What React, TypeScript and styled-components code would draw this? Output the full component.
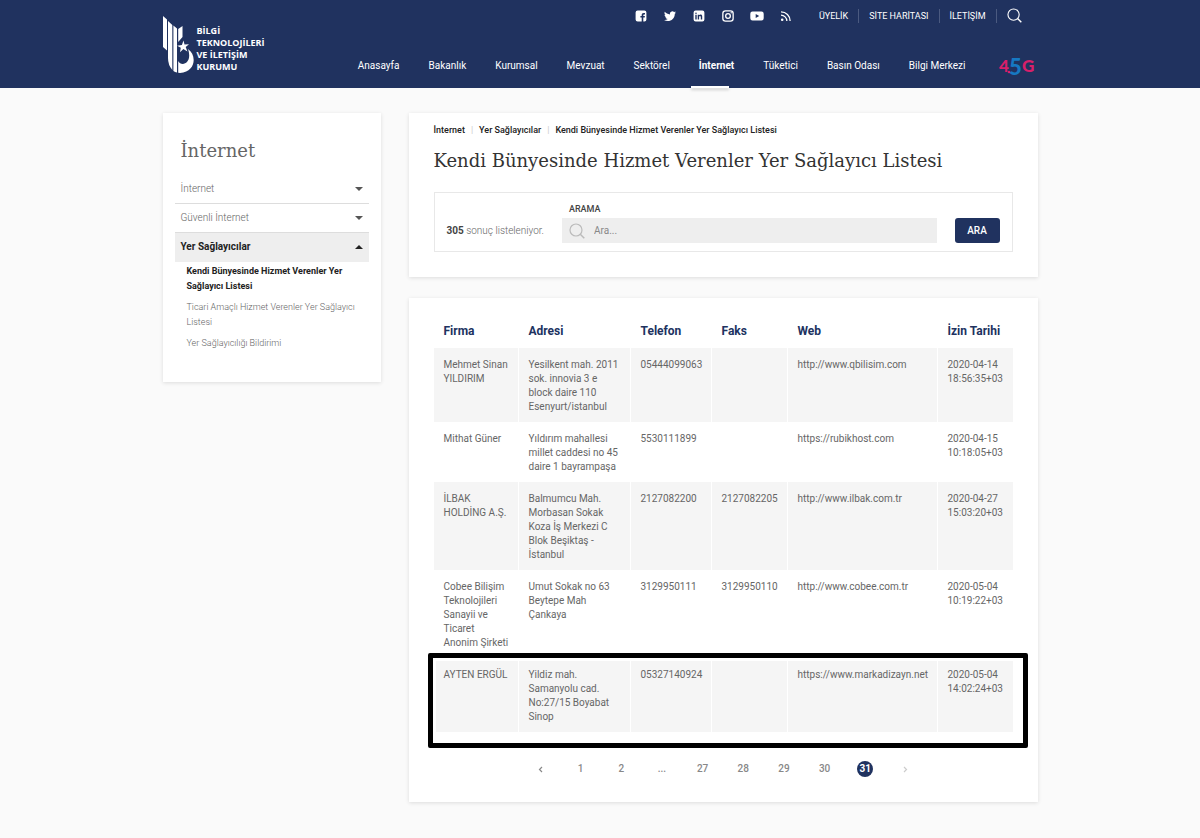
import React from 'react';
import styled, { createGlobalStyle, css } from 'styled-components';

const navy = '#20325f';

const GlobalStyle = createGlobalStyle`
  *, *::before, *::after { box-sizing: border-box; }
  body {
    margin: 0;
    background: #fafafa;
    color: #666;
    font-family: Roboto, "Liberation Sans", sans-serif;
    font-size: 10px;
    line-height: 14px;
  }
  a { color: inherit; text-decoration: none; }
  button, input { font: inherit; }
  ul { list-style: none; margin: 0; padding: 0; }
  h1, h2 { margin: 0; font-weight: 400; }
`;

const Container = styled.div`
  width: 100%;
  max-width: 875px;
  margin: 0 auto;
`;

const Header = styled.header`
  background: ${navy};
  color: #fff;
`;

const HeaderInner = styled(Container)`
  display: flex;
  justify-content: space-between;
  min-height: 88px;
`;

const Logo = styled.a`
  display: flex;
  align-items: flex-start;
  gap: 3px;
  padding-top: 16px;
  svg { width: 31px; height: 57px; }
`;

const LogoText = styled.span`
  padding-top: 9px;
  font-family: "Open Sans", sans-serif;
  font-size: 9px;
  font-weight: 700;
  line-height: 12px;
`;

const HeaderRight = styled.div`
  display: flex;
  flex-direction: column;
  justify-content: space-between;
`;

const TopBar = styled.div`
  display: flex;
  align-items: center;
  justify-content: flex-end;
  gap: 16px;
  padding: 8px 16px 0 0;
`;

const Social = styled.ul`
  display: flex;
  align-items: center;
  gap: 15px;
  a { display: grid; place-items: center; width: 14px; height: 14px; }
  svg { width: 14px; height: 14px; fill: #fff; }
`;

const TopLinks = styled.ul`
  display: flex;
  align-items: center;
  li { padding: 0 10px; border-right: 1px solid #4b5a80; font-size: 9px; }
`;

const SearchButton = styled.button`
  display: grid;
  margin-left: 10px;
  padding: 0;
  border: 0;
  background: none;
  color: #fff;
`;

const TopRight = styled.div`
  display: flex;
  align-items: center;
`;

const Nav = styled.nav`
  display: flex;
  align-items: flex-end;
  gap: 29px;
  padding-right: 3px;
`;

const NavLink = styled.a<{ $active?: boolean }>`
  position: relative;
  padding-bottom: 15px;
  ${(p) =>
    p.$active &&
    css`
      font-weight: 700;
      &::after {
        content: '';
        position: absolute;
        left: -8px;
        bottom: 0;
        width: 38px;
        height: 2px;
        background: #fff;
        box-shadow: 0 2px 3px rgba(0, 0, 0, 0.2);
      }
    `}
`;

const BrandLink = styled.a`
  display: grid;
  margin: 0 0 5px 4px;
  text {
    font-family: Lato, sans-serif;
    font-weight: 900;
  }
`;

const Page = styled(Container)`
  display: flex;
  align-items: flex-start;
  gap: 28px;
  padding: 25px 0 36px;
`;

const Card = styled.section`
  background: #fff;
  box-shadow: 0 1px 4px rgba(0, 0, 0, 0.12);
`;

const Sidebar = styled(Card).attrs({ as: 'aside' })`
  flex: 0 0 218px;
  padding: 25px 12px 31px;
`;

const SideTitle = styled.h2`
  padding: 0 6px;
  font-family: "Roboto Slab", "DejaVu Serif", serif;
  font-size: 18px;
  line-height: 26px;
  color: #666;
`;

const SideMenu = styled.ul`
  margin-top: 11px;
`;

const SideItem = styled.button<{ $open?: boolean }>`
  display: flex;
  align-items: center;
  justify-content: space-between;
  width: 100%;
  height: 29px;
  padding: 0 6px;
  border: 0;
  border-bottom: 1px solid ${(p) => (p.$open ? '#eee' : '#ddd')};
  background: ${(p) => (p.$open ? '#eee' : 'transparent')};
  color: ${(p) => (p.$open ? '#222' : '#666')};
  font-weight: ${(p) => (p.$open ? 700 : 300)};
  text-align: left;
  &::after {
    content: '';
    border: 4px solid transparent;
    border-bottom-width: ${(p) => (p.$open ? '4px' : '0')};
    border-top-width: ${(p) => (p.$open ? '0' : '4px')};
    border-${(p) => (p.$open ? 'bottom' : 'top')}-color: ${(p) => (p.$open ? '#222' : '#555')};
  }
`;

const SubMenu = styled.ul`
  display: grid;
  gap: 6px;
  padding: 2px 6px 0 12px;
`;

const SubLink = styled.a<{ $active?: boolean }>`
  display: block;
  font-size: 9px;
  line-height: 15px;
  font-weight: ${(p) => (p.$active ? 700 : 300)};
  color: ${(p) => (p.$active ? '#222' : '#666')};
`;

const Main = styled.main`
  flex: 1;
  min-width: 0;
  display: grid;
  gap: 21px;
`;

const HeadCard = styled(Card)`
  padding: 10px 25px 25px;
`;

const Crumbs = styled.ol`
  display: flex;
  margin: 0;
  padding: 0;
  list-style: none;
  font-size: 9px;
  font-weight: 500;
  color: #222;
  li + li::before {
    content: '|';
    margin: 0 6px;
    font-weight: 400;
    color: #ccc;
  }
`;

const Title = styled.h1`
  margin-top: 11px;
  font-family: "Roboto Slab", "DejaVu Serif", serif;
  font-size: 18px;
  line-height: 26px;
  color: #333;
`;

const SearchBox = styled.form`
  display: flex;
  align-items: flex-end;
  gap: 18px;
  margin-top: 18px;
  padding: 9px 12px 8px;
  border: 1px solid #e8e8e8;
`;

const ResultCount = styled.p`
  margin: 0;
  font-weight: 300;
  line-height: 25px;
  color: #666;
  b { font-weight: 700; color: #444; }
`;

const Field = styled.div`
  flex: 1;
  label {
    display: block;
    padding-left: 7px;
    margin-bottom: 2px;
    font-size: 9px;
    font-weight: 500;
    color: #444;
  }
`;

const InputWrap = styled.div`
  display: flex;
  align-items: center;
  gap: 9px;
  height: 25px;
  padding: 0 7px;
  background: #eee;
  color: #bbb;
  input {
    flex: 1;
    min-width: 0;
    padding: 0;
    border: 0;
    outline: 0;
    background: none;
    color: #444;
  }
  input::placeholder { color: #888; opacity: 1; }
`;

const SubmitButton = styled.button`
  width: 45px;
  height: 25px;
  padding: 0;
  border: 0;
  border-radius: 3px;
  background: ${navy};
  color: #fff;
  font-weight: 500;
`;

const TableCard = styled(Card)`
  padding: 14px 25px 25px;
`;

const TableWrap = styled.div`
  position: relative;
`;

const Table = styled.table`
  width: 100%;
  table-layout: fixed;
  border-collapse: separate;
  border-spacing: 0;
  th {
    height: 36px;
    padding: 2px 10px 0;
    font-size: 12px;
    font-weight: 700;
    text-align: left;
    color: ${navy};
  }
  td {
    padding: 10px 8px 8px 10px;
    vertical-align: top;
    border-right: 1px solid #fff;
  }
  td:last-child { border-right: 0; }
  tbody tr:nth-child(odd) { background: #f5f5f5; }
`;

const Highlight = styled.div`
  position: absolute;
  left: -6px;
  right: -15px;
  bottom: -16px;
  height: 95px;
  border: 5px solid #000;
  border-radius: 2px;
  box-shadow: inset 0 0 0 3px #fff;
  pointer-events: none;
`;

const Pagination = styled.nav`
  display: flex;
  justify-content: space-between;
  max-width: 382px;
  margin: 29px auto 0;
`;

const PageLink = styled.a<{ $active?: boolean; $muted?: boolean }>`
  display: grid;
  place-items: center;
  width: 16px;
  height: 16px;
  border-radius: 50%;
  line-height: 16px;
  font-weight: ${(p) => (p.$active ? 700 : 500)};
  background: ${(p) => (p.$active ? navy : 'transparent')};
  color: ${(p) => (p.$active ? '#fff' : p.$muted ? '#ccc' : '#888')};
`;

const SearchIcon = ({ size }: { size: number }) => (
  <svg width={size} height={size} viewBox="0 0 16 16" fill="none" stroke="currentColor" aria-hidden="true">
    <circle cx="7" cy="7" r="6" strokeWidth="1.2" />
    <path d="M11.3 11.3 15.3 15.3" strokeWidth="1.5" />
  </svg>
);

const Chevron = ({ back }: { back?: boolean }) => (
  <svg width="5" height="7" viewBox="0 0 5 7" fill="none" stroke="currentColor" strokeWidth="1.2" aria-hidden="true">
    <path d={back ? 'M4 1 1.5 3.500 4 6' : 'M1 1 3.500 3.500 1 6'} />
  </svg>
);

const socials = [
  { name: 'Facebook', d: 'M3.600 1.500h6.800a2 2 0 0 1 2 2v7a2 2 0 0 1-2 2H9.300V8.600h1.400l.2-1.500H9.300v-.9c0-.5.2-.8.8-.8h.9V4H9.700c-1.300 0-2 .8-2 2v1.100H6.400v1.500h1.300v3.900H3.600a2 2 0 0 1-2-2v-7a2 2 0 0 1 2-2z' },
  { name: 'Twitter', d: 'M13 3.400c-.4.200-.9.300-1.400.4.500-.3.900-.8 1.100-1.300-.5.300-1 .5-1.600.6A2.500 2.500 0 0 0 6.900 5.400C4.800 5.300 3 4.300 1.800 2.800c-.7 1.200-.3 2.600.8 3.300-.4 0-.8-.1-1.100-.3 0 1.200.8 2.200 2 2.500-.4.100-.8.100-1.100 0 .3 1 1.200 1.700 2.300 1.700A5 5 0 0 1 1 11c4.900 2.900 10.900-.3 10.800-6.300.5-.3.900-.8 1.200-1.300z' },
  { name: 'LinkedIn', d: 'M3.600 1.500h6.800a2 2 0 0 1 2 2v7a2 2 0 0 1-2 2H3.600a2 2 0 0 1-2-2v-7a2 2 0 0 1 2-2zM3.300 5.700v4.700h1.400V5.700zM4 3.500a.8.800 0 1 0 0 1.600.8.800 0 0 0 0-1.600zM5.700 5.700v4.700h1.400V8c0-1.300 1.700-1.400 1.700 0v2.400h1.400V7.500c0-2.200-2.200-2.400-3.100-1.200v-.6z' },
  { name: 'Instagram', d: 'M4.500 1.200h5a3.300 3.300 0 0 1 3.300 3.300v5a3.300 3.300 0 0 1-3.300 3.300h-5a3.300 3.300 0 0 1-3.300-3.300v-5a3.300 3.300 0 0 1 3.300-3.300zm0 1.300a2 2 0 0 0-2 2v5a2 2 0 0 0 2 2h5a2 2 0 0 0 2-2v-5a2 2 0 0 0-2-2zM7 4a3 3 0 1 1 0 6 3 3 0 0 1 0-6zm0 1.300a1.700 1.700 0 1 0 0 3.400 1.700 1.700 0 0 0 0-3.400zM10.200 3.100a.7.700 0 1 1 0 1.400.7.700 0 0 1 0-1.400z' },
  { name: 'YouTube', d: 'M2.500 2.500h9a2.200 2.200 0 0 1 2.200 2.200v4.600a2.200 2.200 0 0 1-2.200 2.200h-9A2.200 2.200 0 0 1 .3 9.300V4.700a2.200 2.200 0 0 1 2.200-2.200zM5.700 5v4L9.200 7z' },
  { name: 'RSS', d: 'M3.200 9.400a1.300 1.300 0 1 1 0 2.600 1.300 1.300 0 0 1 0-2.600zM2 5.500A6.500 6.500 0 0 1 8.500 12H7.200A5.200 5.200 0 0 0 2 6.800zM2 2.200A9.800 9.800 0 0 1 11.800 12h-1.300A8.500 8.500 0 0 0 2 3.500z' },
];

const navItems = ['Anasayfa', 'Bakanlık', 'Kurumsal', 'Mevzuat', 'Sektörel', 'İnternet', 'Tüketici', 'Basın Odası', 'Bilgi Merkezi'];

const columns = [
  { title: 'Firma', width: 85 },
  { title: 'Adresi', width: 112 },
  { title: 'Telefon', width: 81 },
  { title: 'Faks', width: 76 },
  { title: 'Web', width: 150 },
  { title: 'İzin Tarihi', width: 75 },
];
const totalWidth = columns.reduce((sum, c) => sum + c.width, 0);

const rows = [
  ['Mehmet Sinan YILDIRIM', 'Yesilkent mah. 2011 sok. innovia 3 e block daire 110 Esenyurt/istanbul', '05444099063', '', 'http://www.qbilisim.com', '2020-04-14 18:56:35+03'],
  ['Mithat Güner', 'Yıldırım mahallesi millet caddesi no 45 daire 1 bayrampaşa', '5530111899', '', 'https://rubikhost.com', '2020-04-15 10:18:05+03'],
  ['İLBAK HOLDİNG A.Ş.', 'Balmumcu Mah. Morbasan Sokak Koza İş Merkezi C Blok Beşiktaş - İstanbul', '2127082200', '2127082205', 'http://www.ilbak.com.tr', '2020-04-27 15:03:20+03'],
  ['Cobee Bilişim Teknolojileri Sanayii ve Ticaret Anonim Şirketi', 'Umut Sokak no 63 Beytepe Mah Çankaya', '3129950111', '3129950110', 'http://www.cobee.com.tr', '2020-05-04 10:19:22+03'],
  ['AYTEN ERGÜL', 'Yildiz mah. Samanyolu cad. No:27/15 Boyabat Sinop', '05327140924', '', 'https://www.markadizayn.net', '2020-05-04 14:02:24+03'],
];

const pages = ['1', '2', '...', '27', '28', '29', '30', '31'];

export default function App() {
  return (
    <>
      <GlobalStyle />
      <Header>
        <HeaderInner>
          <Logo href="#">
            <svg viewBox="0 0 31 57" fill="#fff" aria-hidden="true">
              <path d="M0 0 4 3.500V34.500L0 31zM5 5 9.300 9V54Q5 49 5 42zM10.400 9.500 14 12.500V56.500Q12 56 10.400 55zM15.200 13 19.500 10V21L15.200 26z" />
              <path d="M20.500 24.500l1 4 4.500-.2-3.300 2.700 1.700 4.400-4-2.300-3.400 3.200.8-4.500-3.600-2 4.700-.9z" />
              <path d="M25 33C34 39 33 56 17 57L15.200 56.800V45C18 51 30 48 25 33z" />
            </svg>
            <LogoText>
              BİLGİ<br />TEKNOLOJİLERİ<br />VE İLETİŞİM<br />KURUMU
            </LogoText>
          </Logo>
          <HeaderRight>
            <TopBar>
              <Social>
                {socials.map((s) => (
                  <li key={s.name}>
                    <a href="#" aria-label={s.name}>
                      <svg viewBox="0 0 14 14" fillRule="evenodd"><path d={s.d} /></svg>
                    </a>
                  </li>
                ))}
              </Social>
              <TopRight>
                <TopLinks>
                  <li><a href="#">ÜYELİK</a></li>
                  <li><a href="#">SİTE HARİTASI</a></li>
                  <li><a href="#">İLETİŞİM</a></li>
                </TopLinks>
                <SearchButton type="button" aria-label="Ara"><SearchIcon size={15} /></SearchButton>
              </TopRight>
            </TopBar>
            <Nav>
              {navItems.map((item) => (
                <NavLink key={item} href="#" $active={item === 'İnternet'}>{item}</NavLink>
              ))}
              <BrandLink href="#" aria-label="4.5G">
                <svg width="36" height="30" viewBox="0 0 36 30">
                  <text x="0" y="19" fontSize="17" fill="#d81f6a">4</text>
                  <circle cx="10" cy="19" r="1.300" fill="#d81f6a" />
                  <text x="10" y="22" fontSize="22" fill="#1678c2">5</text>
                  <text x="23" y="19" fontSize="17" fill="#d81f6a">G</text>
                </svg>
              </BrandLink>
            </Nav>
          </HeaderRight>
        </HeaderInner>
      </Header>
      <Page>
        <Sidebar>
          <SideTitle>İnternet</SideTitle>
          <SideMenu>
            <li><SideItem type="button">İnternet</SideItem></li>
            <li><SideItem type="button">Güvenli İnternet</SideItem></li>
            <li>
              <SideItem type="button" $open aria-expanded="true">Yer Sağlayıcılar</SideItem>
              <SubMenu>
                <li><SubLink href="#" $active>Kendi Bünyesinde Hizmet Verenler Yer Sağlayıcı Listesi</SubLink></li>
                <li><SubLink href="#">Ticari Amaçlı Hizmet Verenler Yer Sağlayıcı Listesi</SubLink></li>
                <li><SubLink href="#">Yer Sağlayıcılığı Bildirimi</SubLink></li>
              </SubMenu>
            </li>
          </SideMenu>
        </Sidebar>
        <Main>
          <HeadCard>
            <Crumbs>
              <li><a href="#">İnternet</a></li>
              <li><a href="#">Yer Sağlayıcılar</a></li>
              <li><a href="#">Kendi Bünyesinde Hizmet Verenler Yer Sağlayıcı Listesi</a></li>
            </Crumbs>
            <Title>Kendi Bünyesinde Hizmet Verenler Yer Sağlayıcı Listesi</Title>
            <SearchBox onSubmit={(e) => e.preventDefault()}>
              <ResultCount><b>305</b> sonuç listeleniyor.</ResultCount>
              <Field>
                <label htmlFor="search">ARAMA</label>
                <InputWrap>
                  <SearchIcon size={16} />
                  <input id="search" type="text" placeholder="Ara..." />
                </InputWrap>
              </Field>
              <SubmitButton type="submit">ARA</SubmitButton>
            </SearchBox>
          </HeadCard>
          <TableCard>
            <TableWrap>
              <Table>
                <colgroup>
                  {columns.map((c) => <col key={c.title} style={{ width: `${(c.width / totalWidth) * 100}%` }} />)}
                </colgroup>
                <thead>
                  <tr>{columns.map((c) => <th key={c.title} scope="col">{c.title}</th>)}</tr>
                </thead>
                <tbody>
                  {rows.map((r) => (
                    <tr key={r[0]}>{r.map((cell, i) => <td key={i}>{cell}</td>)}</tr>
                  ))}
                </tbody>
              </Table>
              <Highlight />
            </TableWrap>
            <Pagination aria-label="Sayfalar">
              <PageLink href="#" aria-label="Önceki"><Chevron back /></PageLink>
              {pages.map((p) => (
                <PageLink key={p} href="#" $active={p === '31'}>{p}</PageLink>
              ))}
              <PageLink href="#" $muted aria-label="Sonraki"><Chevron /></PageLink>
            </Pagination>
          </TableCard>
        </Main>
      </Page>
    </>
  );
}
